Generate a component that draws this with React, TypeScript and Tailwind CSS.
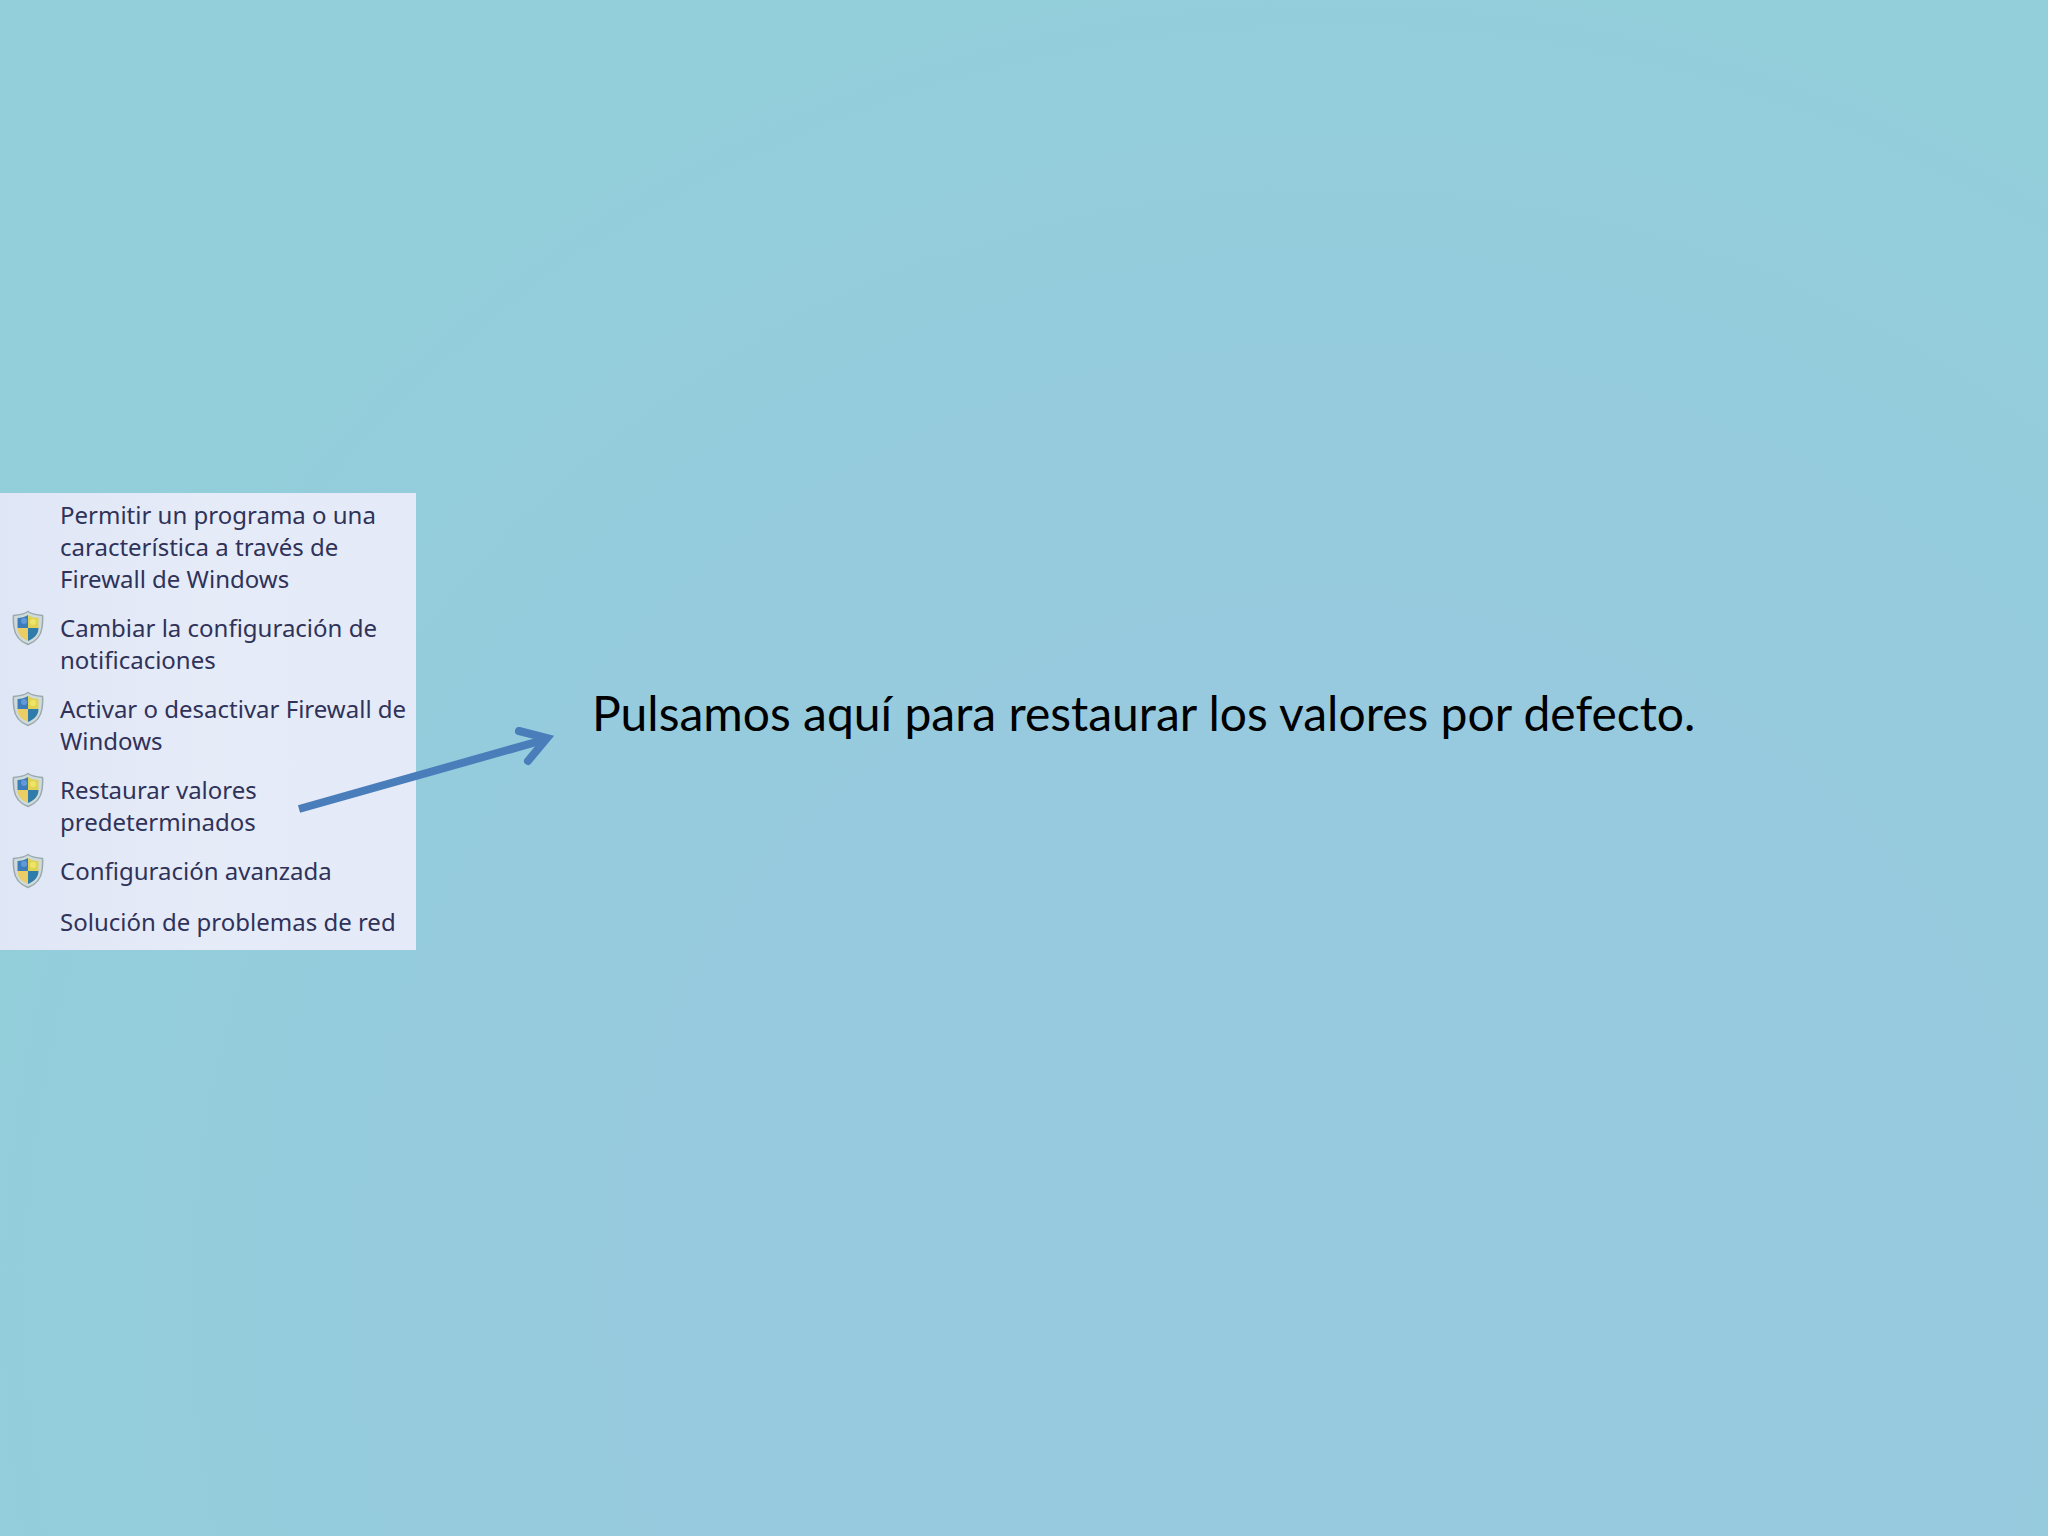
type Task = {
  label: string;
  shield: boolean;
};

const tasks: Task[] = [
  { label: "Permitir un programa o una característica a través de Firewall de Windows", shield: false },
  { label: "Cambiar la configuración de notificaciones", shield: true },
  { label: "Activar o desactivar Firewall de Windows", shield: true },
  { label: "Restaurar valores predeterminados", shield: true },
  { label: "Configuración avanzada", shield: true },
  { label: "Solución de problemas de red", shield: false },
];

function ShieldIcon() {
  return (
    <svg viewBox="0 0 32 36" className="h-9 w-8" aria-hidden="true">
      <defs>
        <clipPath id="shield-inner">
          <path d="M16 5C13 7 9 8 5.500 8V18c0 6.500 4.500 10.500 10.500 13 6-2.500 10.500-6.500 10.500-13V8C23 8 19 7 16 5Z" />
        </clipPath>
      </defs>
      <path
        d="M16 1.500C12.500 4 7.500 5 1.500 5.500c-.5 4 0 8 .5 12 1 8.500 6 14 14 17 8-3 13-8.500 14-17 .5-4 1-8 .5-12C24.500 5 19.500 4 16 1.500Z"
        fill="#cfdadb"
        stroke="#9aa9ae"
        strokeWidth="1.5"
      />
      <g clipPath="url(#shield-inner)">
        <rect x="4" y="3" width="12" height="15" fill="#3c7cba" />
        <rect x="16" y="3" width="12" height="15" fill="#e0d353" />
        <rect x="4" y="18" width="12" height="15" fill="#ebcd66" />
        <rect x="16" y="18" width="12" height="15" fill="#2f7cab" />
        <circle cx="12" cy="11" r="3" fill="#6299d8" />
        <circle cx="21" cy="12" r="3" fill="#eee468" />
      </g>
    </svg>
  );
}

function Arrow() {
  return (
    <svg viewBox="0 0 270 100" className="pointer-events-none absolute top-[230px] left-[292px] h-[100px] w-[270px]" aria-hidden="true">
      <g fill="none" stroke="#4a7ebb" strokeWidth="8">
        <path d="M7 86 255 16" />
        <path d="M227 8 255 15 236 38" strokeLinecap="round" strokeMiterlimit="10" />
      </g>
    </svg>
  );
}

export default function App() {
  return (
    <main className="min-h-screen bg-radial-[at_65%_85%] from-[#97cade] from-35% to-[#93cedb] to-75% pt-[493px]">
      <div className="relative flex items-start">
        <nav className="w-[416px] shrink-0 bg-linear-to-r from-[#dfe6f5] via-[#e6ebf8] to-[#e5eaf8] pt-1.5 pb-3" aria-label="Firewall de Windows">
          <ul className="flex flex-col gap-[17px]">
            {tasks.map((task) => (
              <li key={task.label} className="flex items-start">
                <span className="-mt-0.5 flex w-[60px] shrink-0 pl-3">{task.shield && <ShieldIcon />}</span>
                <a href="#" className="font-['Noto_Sans',sans-serif] text-2xl leading-8 text-[#2f3259]">
                  {task.label}
                </a>
              </li>
            ))}
          </ul>
        </nav>
        <p className="mt-48 ml-44 font-['Lato',sans-serif] text-5xl leading-14 text-black">
          Pulsamos aquí para restaurar los valores por defecto.
        </p>
        <Arrow />
      </div>
    </main>
  );
}
